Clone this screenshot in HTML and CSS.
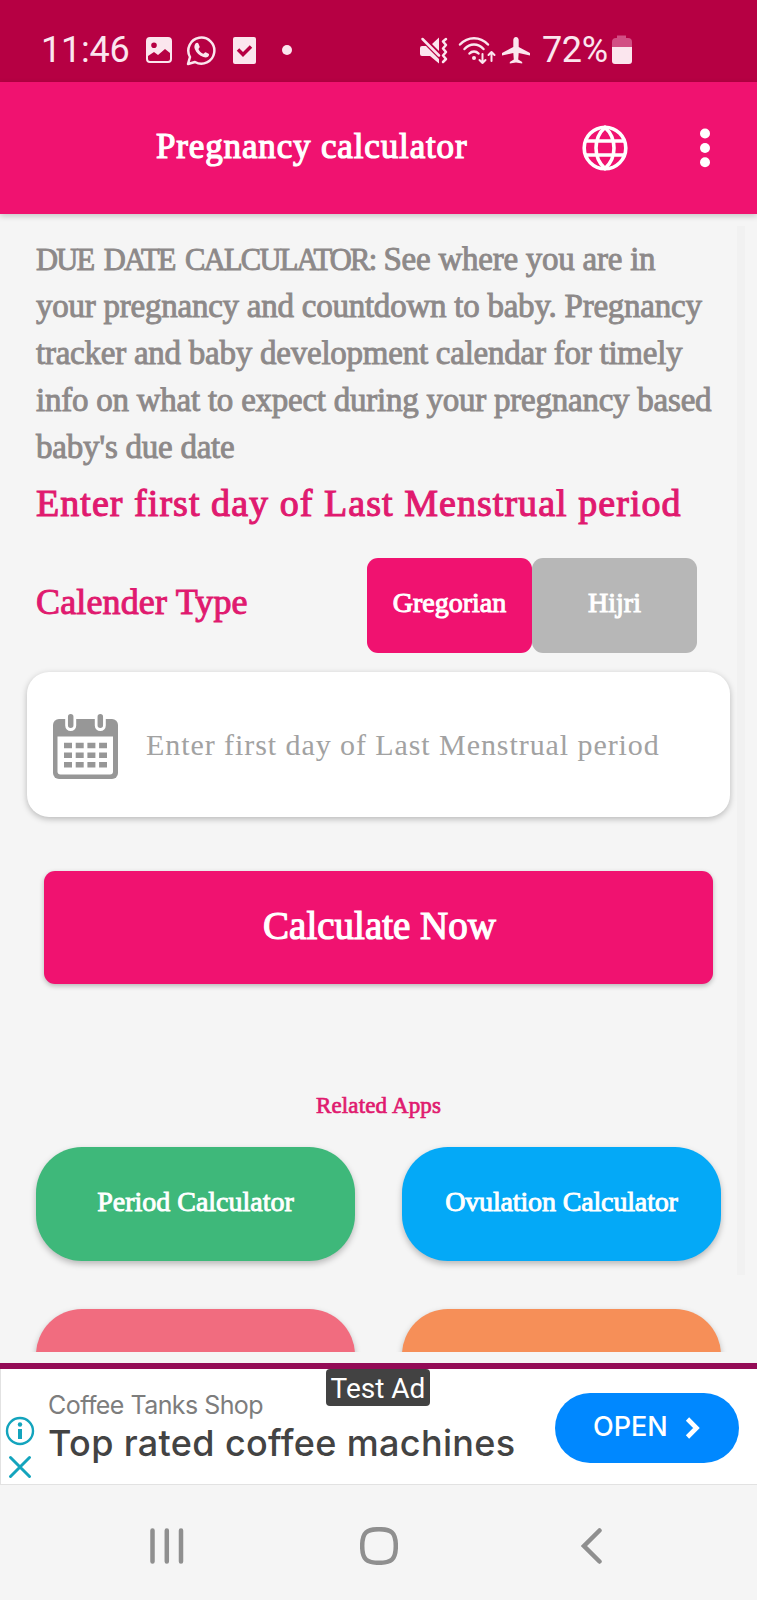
FILE: index.html
```
<!doctype html>
<html lang="en">
<head>
    <meta charset="UTF-8">
    <title>Pregnancy calculator</title>
    <link rel="stylesheet" href="styles.css">
</head>
<body>
    <div class="status-bar">
        <span class="clock">11:46</span>
        <svg class="icon-image" width="26" height="26" viewBox="0 0 26 26">
            <path fill-rule="evenodd" d="M4 0h18a4 4 0 0 1 4 4v18a4 4 0 0 1-4 4H4a4 4 0 0 1-4-4V4a4 4 0 0 1 4-4zM8 5.500a2.800 2.800 0 1 0 0 5.600a2.800 2.800 0 1 0 0-5.600zM2 19v3a2 2 0 0 0 2 2h18a2 2 0 0 0 2-2v-6l-5-4-7 6-4-3z"/>
        </svg>
        <svg class="icon-chat" width="31" height="31" viewBox="0 0 31 31">
            <path class="line" d="M2 29l2-7a13 13 0 1 1 5 5z"/>
            <path d="M9.500 8.500c1-1 2.500-1 3 .3l1.200 3c.2.800-1.400 1.800-1.200 2.400 1 2 2.500 3.500 4.700 4.500.800.200 1.600-1.700 2.400-1.500l3 1.500c.9.500.3 2.300-.6 3-1.200.9-2.700 1-4.500.4-4-1.300-7.200-4.300-8.700-8-.8-2.300-.4-4.200.7-5.600z"/>
        </svg>
        <svg class="icon-check" width="23" height="27" viewBox="0 0 23 27">
            <rect width="23" height="27" rx="2"/>
            <path class="tick" d="M5 12.500l5 5 8-8"/>
        </svg>
        <span class="dot"></span>
        <svg class="icon-mute" width="28" height="27" viewBox="0 0 28 27">
            <path d="M2 9h4l13 13v4.500L10 19H2q-2 0-2-2v-6q0-2 2-2zM12 7l7-6.500V14z"/>
            <path class="line" d="M2.500 2L19 18.500"/>
            <path class="line" d="M26 2l-3 2.500 3 3.500-3 3.500 3 3.500-3 3.500 3 3.500-3 3"/>
        </svg>
        <svg class="icon-wifi" width="38" height="29" viewBox="0 0 38 29">
            <path class="line" d="M2 8.500C10 0 22 0 30 8.500M6.500 13C12 7 20 7 25.500 13M11.500 17.500c2.500-2.700 6.500-2.700 9 0"/>
            <circle cx="16" cy="22" r="2"/>
            <path class="line thin" d="M24.500 18V27M21.500 24l3 3 3-3M33.500 25V16M30.500 19l3-3 3 3"/>
        </svg>
        <svg class="icon-plane" width="28" height="27" viewBox="0 0 28 27">
            <path d="M14 0c1.700 0 2.700 1.500 2.700 3v7L28 16v2.500l-11.300-2.500-.5 6.500 4 2.500v1.500L14 25.500 7.800 26.500V25l4-2.500-.5-6.500L0 18.500V16l11.300-6V3c0-1.500 1-3 2.700-3z"/>
        </svg>
        <span class="percent">72%</span>
        <svg class="icon-battery" width="20" height="30" viewBox="0 0 20 30">
            <path class="empty" d="M5 0.500h9v2.500h2q4 0 4 4v5H0V7q0-4 4-4h1z"/>
            <path d="M0 12h20v14q0 3-3 3H3q-3 0-3-3z"/>
        </svg>
    </div>

    <div class="app-bar">
        <h1>Pregnancy calculator</h1>
        <svg class="globe" width="46" height="46" viewBox="0 0 46 46">
            <circle cx="23" cy="23" r="20.800"/>
            <path d="M23 2.500C11 13 11 33 23 43.500C35 33 35 13 23 2.500zM4 16h38M4 30h38"/>
        </svg>
        <svg class="menu" width="10" height="40" viewBox="0 0 10 40">
            <circle cx="5" cy="5.500" r="5"/>
            <circle cx="5" cy="20" r="5"/>
            <circle cx="5" cy="34.300" r="5"/>
        </svg>
    </div>

    <div class="content">
        <p class="intro">
            <span class="caps">DUE DATE CALCULATOR:</span> See where you are in<br>
            your pregnancy and countdown to baby. Pregnancy<br>
            tracker and baby development calendar for timely<br>
            info on what to expect during your pregnancy based<br>
            baby's due date
        </p>
        <h2>Enter first day of Last Menstrual period</h2>

        <div class="type-row">
            <span class="type-label">Calender Type</span>
            <div class="toggle">
                <button class="active">Gregorian</button>
                <button>Hijri</button>
            </div>
        </div>

        <div class="date-field">
            <svg width="65" height="65" viewBox="0 0 65 65">
                <rect y="5" width="65" height="60" rx="6" fill="#979797"/>
                <path d="M4.500 22.500h55.500v35q0 3-3 3H7.500q-3 0-3-3z" fill="#fff"/>
                <path d="M17.700 3v8.500M47.300 3v8.500" stroke="#fff" stroke-width="11" stroke-linecap="round"/>
                <path d="M17.700 2.800v8.500M47.300 2.800v8.500" stroke="#979797" stroke-width="5.500" stroke-linecap="round"/>
                <path d="M11 31.500h43M11 41.200h43M11 50.700h43" stroke="#979797" stroke-width="5.500" stroke-dasharray="8 3.700"/>
            </svg>
            <span class="placeholder">Enter first day of Last Menstrual period</span>
        </div>

        <button class="calculate">Calculate Now</button>

        <h3>Related Apps</h3>
        <div class="apps">
            <a class="app green">Period Calculator</a>
            <a class="app blue">Ovulation Calculator</a>
            <a class="app coral"></a>
            <a class="app orange"></a>
        </div>
        <div class="scroll-track"></div>
    </div>

    <div class="ad">
        <div class="ad-marks">
            <svg width="30" height="30" viewBox="0 0 30 30">
                <circle cx="15" cy="15" r="13" fill="none" stroke="#13a4bd" stroke-width="2.400"/>
                <path d="M13 13h4v10h-4z" fill="#13a4bd"/>
                <circle cx="15" cy="8.500" r="2.200" fill="#13a4bd"/>
            </svg>
            <svg width="24" height="24" viewBox="0 0 24 24">
                <path d="M2.500 2.500l19 19M21.500 2.500l-19 19" stroke="#13a4bd" stroke-width="3" stroke-linecap="round"/>
            </svg>
        </div>
        <div class="ad-text">
            <div class="ad-shop">Coffee Tanks Shop</div>
            <div class="ad-title">Top rated coffee machines</div>
        </div>
        <div class="ad-open">
            <span>OPEN</span>
            <svg width="16" height="22" viewBox="0 0 16 22">
                <path d="M2.500 2L11.500 11L2.500 20" fill="none" stroke="#fff" stroke-width="4.600"/>
            </svg>
        </div>
        <div class="ad-badge">Test Ad</div>
    </div>

    <div class="nav-bar">
        <svg width="34" height="36" viewBox="0 0 34 36">
            <path d="M2.500 2.500v31M16.800 2.500v31M31 2.500v31"/>
        </svg>
        <svg class="home" width="38" height="38" viewBox="0 0 38 38">
            <path d="M19 2.200C31 2.200 35.800 5 35.800 19S31 35.800 19 35.800 2.200 33 2.200 19 7 2.200 19 2.200z"/>
        </svg>
        <svg width="22" height="36" viewBox="0 0 22 36">
            <path d="M18.500 2.500L3 18l15.500 15.500"/>
        </svg>
    </div>
</body>
</html>
```

FILE: styles.css
```
* {
    box-sizing: border-box;
}
body {
    margin: 0;
    width: 757px;
    height: 1600px;
    overflow: hidden;
    background-color: #f5f5f5;
    font-family: "Liberation Serif", serif;
    display: flex;
    flex-direction: column;
    white-space: nowrap;
}
h1, h2, h3, p {
    margin: 0;
    font-weight: normal;
}
button {
    border: none;
    padding: 0;
    font-family: inherit;
    color: #fff;
}
svg {
    display: block;
    flex: none;
}

/* status bar */
.status-bar {
    height: 82px;
    padding: 18px 0 0 41px;
    background-color: #b60043;
    color: #fbe6ee;
    fill: #fbe6ee;
    font-family: Roboto, sans-serif;
    font-size: 36px;
    display: flex;
    align-items: center;
}
.status-bar .line {
    fill: none;
    stroke: #fbe6ee;
    stroke-width: 2.500;
    stroke-linecap: round;
    stroke-linejoin: round;
}
.status-bar .thin {
    stroke-width: 2;
}
.status-bar .tick {
    fill: none;
    stroke: #b60043;
    stroke-width: 3.500;
}
.clock {
    width: 105px;
    padding-bottom: 1px;
    letter-spacing: -0.2px;
}
.icon-chat {
    margin-left: 14px;
}
.icon-check {
    margin-left: 16px;
}
.dot {
    width: 10px;
    height: 10px;
    margin-left: 26px;
    border-radius: 50%;
    background-color: #fbe6ee;
}
.icon-mute {
    margin-left: 128px;
}
.icon-wifi {
    margin-left: 10px;
}
.icon-plane {
    margin-left: 6px;
}
.percent {
    width: 70px;
    margin-left: 12px;
    padding-bottom: 1px;
    letter-spacing: -0.4px;
}
.icon-battery .empty {
    fill: #d24f84;
}

/* app bar */
.app-bar {
    height: 132px;
    padding-left: 156px;
    background-color: #f01270;
    box-shadow: 0 2px 6px rgba(0, 0, 0, 0.2);
    color: #fff;
    display: flex;
    align-items: center;
    position: relative;
}
.app-bar h1 {
    width: 426px;
    padding-bottom: 3px;
    font-size: 35px;
    letter-spacing: 0.85px;
    -webkit-text-stroke: 1.2px #fff;
}
.globe {
    fill: none;
    stroke: #fff;
    stroke-width: 3.600;
}
.menu {
    margin-left: 72px;
    fill: #fff;
}

/* page content */
.content {
    height: 1138px;
    padding: 22px 36px 0;
    overflow: hidden;
    position: relative;
}
.intro {
    font-size: 33px;
    line-height: 47px;
    letter-spacing: -0.24px;
    color: #8d8989;
    -webkit-text-stroke: 0.9px #8d8989;
}
.caps {
    font-size: 30.5px;
    line-height: 1;
    letter-spacing: -1.75px;
    word-spacing: 4.5px;
}
h2 {
    font-size: 38px;
    line-height: 65px;
    letter-spacing: 1.05px;
    color: #e01a6f;
    -webkit-text-stroke: 1.1px #e01a6f;
}
.type-row {
    height: 95px;
    margin: 22px 24px 0 0;
    display: flex;
    justify-content: space-between;
    align-items: center;
}
.type-label {
    padding-bottom: 7px;
    font-size: 36px;
    letter-spacing: 0.15px;
    color: #e01a6f;
    -webkit-text-stroke: 1px #e01a6f;
}
.toggle {
    display: flex;
}
.toggle button {
    width: 165px;
    height: 95px;
    padding-bottom: 5px;
    border-radius: 11px;
    background-color: #b7b7b7;
    font-size: 28px;
    -webkit-text-stroke: 1px #fff;
}
.toggle .active {
    background-color: #f01270;
}
.date-field {
    height: 145px;
    margin: 19px -9px 0;
    padding-left: 26px;
    border-radius: 22px;
    background-color: #fff;
    box-shadow: 0 2px 6px rgba(0, 0, 0, 0.25);
    display: flex;
    align-items: center;
    gap: 28px;
}
.date-field svg {
    margin-top: 3px;
}
.placeholder {
    font-size: 30px;
    letter-spacing: 0.93px;
    color: #a2a2a2;
}
.calculate {
    display: block;
    width: 669px;
    height: 113px;
    margin: 54px 0 0 8px;
    padding: 0 0 5px 2px;
    border-radius: 11px;
    background-color: #f01270;
    box-shadow: 0 2px 5px rgba(0, 0, 0, 0.25);
    font-size: 39px;
    -webkit-text-stroke: 1.2px #fff;
}
h3 {
    height: 163px;
    padding-top: 109px;
    font-size: 23px;
    letter-spacing: 0.15px;
    text-align: center;
    color: #e01a6f;
    -webkit-text-stroke: 0.7px #e01a6f;
}
.apps {
    display: grid;
    grid-template-columns: 319px 319px;
    gap: 48px 47px;
}
.app {
    height: 114px;
    padding-bottom: 4px;
    border-radius: 46px;
    box-shadow: 0 3px 6px rgba(0, 0, 0, 0.25);
    color: #fff;
    font-size: 28px;
    -webkit-text-stroke: 0.9px #fff;
    display: flex;
    align-items: center;
    justify-content: center;
}
.green {
    background-color: #3eb87a;
}
.blue {
    background-color: #04a9f7;
    letter-spacing: -0.15px;
}
.coral {
    background-color: #f16c7f;
}
.orange {
    background-color: #f68f58;
}
.scroll-track {
    position: absolute;
    top: 12px;
    right: 12px;
    width: 8px;
    height: 1049px;
    background-color: #f1f1f1;
}

/* ad banner */
.ad {
    height: 122px;
    margin-top: 11px;
    border-top: 6px solid #930b56;
    border-bottom: 1px solid #e2e2e2;
    background-color: #fff;
    font-family: Inter, sans-serif;
    display: flex;
    position: relative;
}
.ad-marks {
    width: 48px;
    padding: 47px 0 0 4px;
    border-left: 1px solid #e2e2e2;
}
.ad-marks svg + svg {
    margin: 9px 0 0 3px;
}
.ad-text {
    width: 507px;
    padding-top: 20px;
}
.ad-shop {
    font-size: 25px;
    line-height: 32px;
    letter-spacing: -0.55px;
    color: #7d7d7d;
}
.ad-title {
    font-size: 36px;
    font-weight: 500;
    line-height: 44px;
    letter-spacing: 0.35px;
    color: #434343;
}
.ad-open {
    width: 184px;
    height: 70px;
    margin-top: 24px;
    padding: 0 38px 3px 38px;
    border-radius: 35px;
    background-color: #0088ff;
    color: #fff;
    font-size: 27px;
    font-weight: 500;
    display: flex;
    align-items: center;
    justify-content: space-between;
}
.ad-open svg {
    margin-top: 2px;
}
.ad-badge {
    position: absolute;
    left: 326px;
    top: 0;
    width: 104px;
    height: 37px;
    border-radius: 4px;
    background-color: #424242;
    color: #fff;
    font: 28px/39px Roboto, sans-serif;
    text-align: center;
}

/* system navigation */
.nav-bar {
    height: 115px;
    padding: 6px 154px 0 150px;
    fill: none;
    stroke: #8f8f8f;
    stroke-width: 4.500;
    stroke-linecap: round;
    display: flex;
    align-items: center;
    justify-content: space-between;
}
.home {
    margin-right: 7px;
}
```
